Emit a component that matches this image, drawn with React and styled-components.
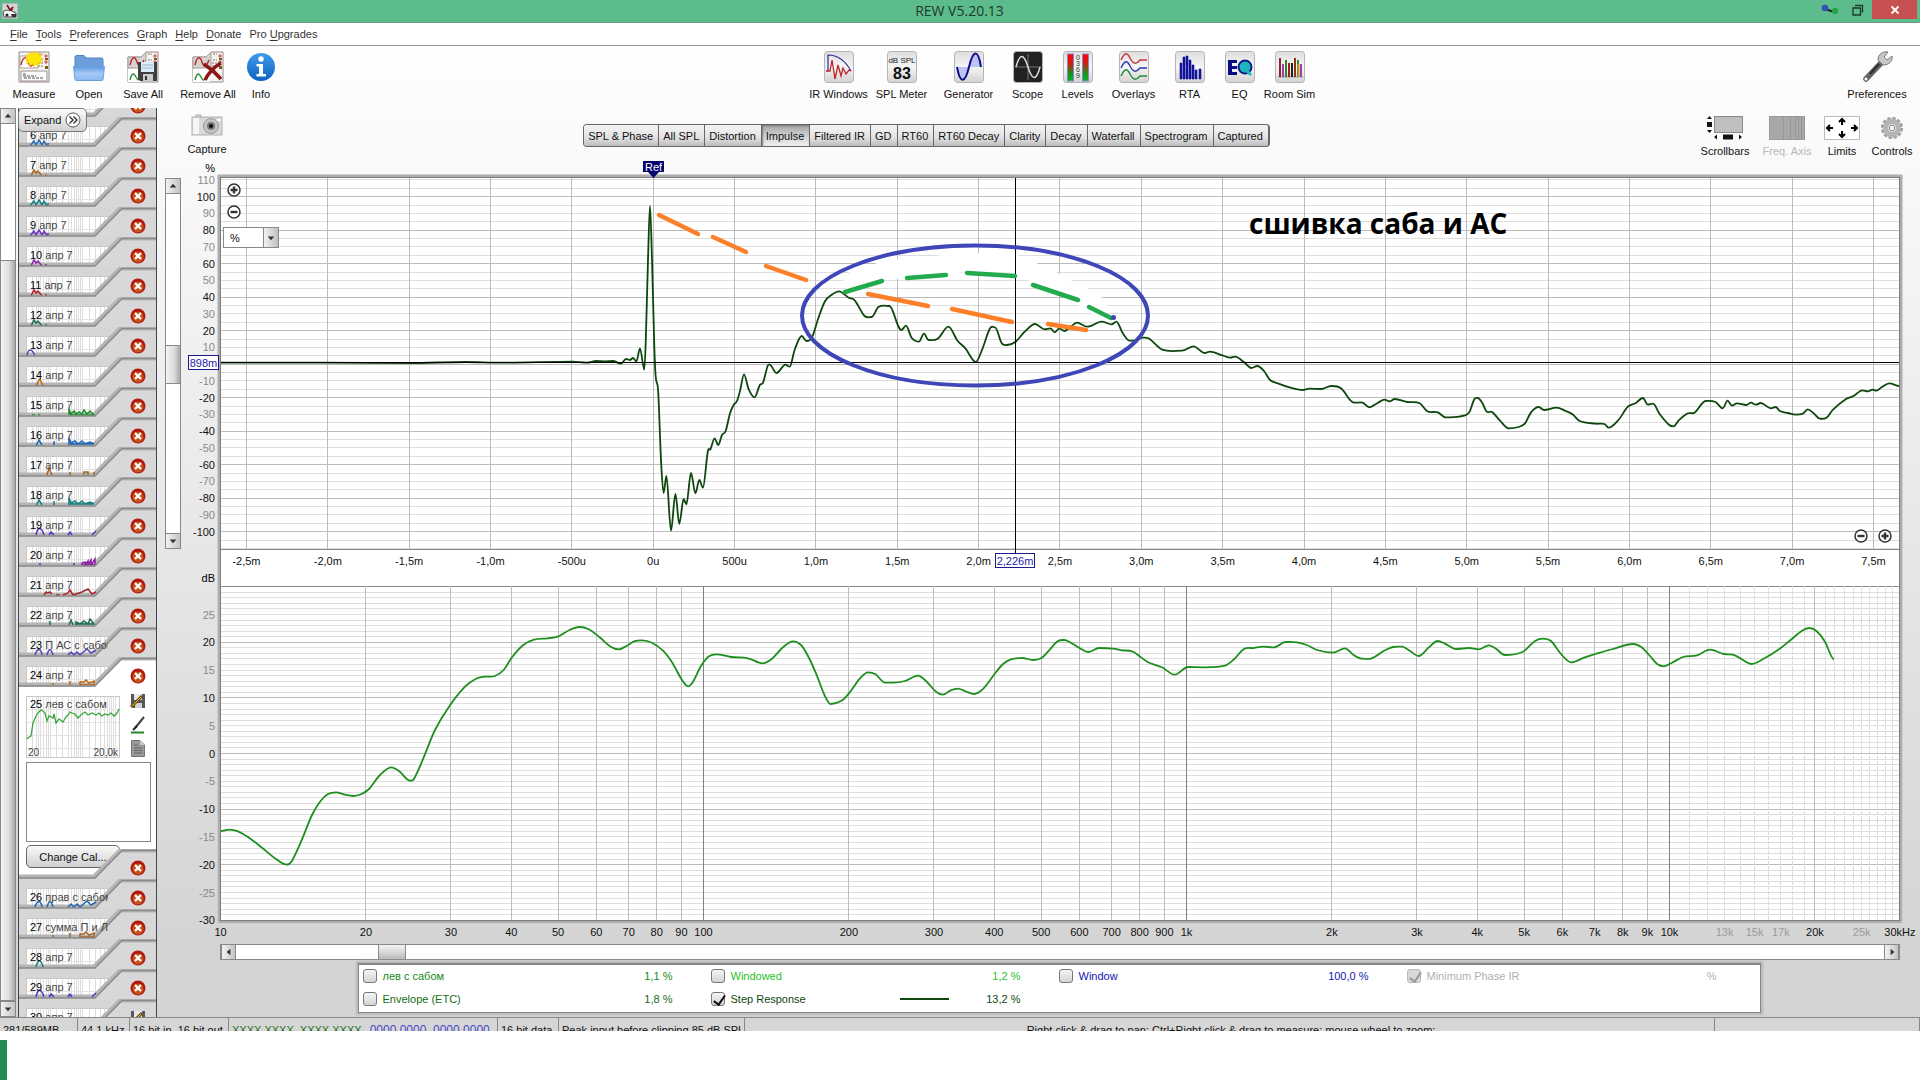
import React, { useState } from 'react'
import styled, { createGlobalStyle, css } from 'styled-components'

/* ---------- data ---------- */

const MENU = [
  ['', 'F', 'ile'],
  ['', 'T', 'ools'],
  ['', 'P', 'references'],
  ['', 'G', 'raph'],
  ['', 'H', 'elp'],
  ['', 'D', 'onate'],
  ['Pro ', 'U', 'pgrades'],
]

const TABS = [
  'SPL & Phase',
  'All SPL',
  'Distortion',
  'Impulse',
  'Filtered IR',
  'GD',
  'RT60',
  'RT60 Decay',
  'Clarity',
  'Decay',
  'Waterfall',
  'Spectrogram',
  'Captured',
]

// trace: the bit of the response that shows at the bottom of each thumbnail
const WAVES = {
  a: 'M12 30 L16 25 L18 29 L21 24 L24 29 L26 25 L29 30 M30 30 V27',
  b: 'M13 30 L16 24 L18 27 L20 25 L24 30 M28 30 V28',
  c: 'M9 30 C10 22 14 22 17 30',
  d: 'M18 30 L20 26 L22 23 L25 30',
  e: 'M14 29 H17 M20 29 H22 M51 29 V23 L53 28 L56 25 L58 28 L61 26 L64 28 L66 24 L69 28 L72 25 L76 29 H52',
  f: 'M18 30 L21 24 L24 29 M36 29 V25 M51 29 V22 L53 27 L57 25 L60 28 L64 25 L67 28 L72 26 L76 28 H52',
  g: 'M29 29 L31 22 L34 29 M52 29 V26 M66 29 V26 H70 V29 M76 29 V26',
  h: 'M18 29 C20 20 23 20 26 29 M31 29 L33 26 L36 29 M50 29 L52 26 L54 29 M74 29 L78 25',
  i: 'M22 29 V27 M56 29 V27 M64 29 V27 L67 26 V29 L70 25 V29 L73 24 V29 L77 23 V29 H64',
  j: 'M26 29 L28 26 L30 27 L32 26 L34 28 M38 29 H42 M45 29 L50 27 L52 24 L55 29 L64 26 L70 23 L74 28 L78 26',
  k: 'M32 29 V25 M51 29 L53 24 L55 29 M58 29 V26 L62 28 L66 25 L70 28 L72 23 L76 28 H58',
  l: 'M17 29 C19 22 23 22 24 29 M29 29 C31 22 33 22 35 29 M50 29 L53 26 L56 29 L59 26 L62 29 L69 23 L73 27 L78 24',
  m: 'M35 29 V27 M52 29 V25 M62 29 V26 H66 L68 24 L71 27 L76 25 V29 H62',
  n: 'M18 29 C20 21 23 21 25 29',
}

const BEFORE = [
  [5, 'апр 7', '#2b8a2b', 'a'],
  [6, 'апр 7', '#2d6fb5', 'a'],
  [7, 'апр 7', '#a8651c', 'b'],
  [8, 'апр 7', '#178080', 'a'],
  [9, 'апр 7', '#6a35c4', 'a'],
  [10, 'апр 7', '#8b22b0', 'b'],
  [11, 'апр 7', '#b01f24', 'b'],
  [12, 'апр 7', '#1c6e4d', 'b'],
  [13, 'апр 7', '#5547b5', 'c'],
  [14, 'апр 7', '#bb6a10', 'd'],
  [15, 'апр 7', '#1c9029', 'e'],
  [16, 'апр 7', '#1d66b4', 'f'],
  [17, 'апр 7', '#a5631c', 'g'],
  [18, 'апр 7', '#178080', 'f'],
  [19, 'апр 7', '#5a35c4', 'h'],
  [20, 'апр 7', '#8b1fa5', 'i'],
  [21, 'апр 7', '#a8232b', 'j'],
  [22, 'апр 7', '#1c7050', 'k'],
  [23, 'П АС с сабом', '#5a3fb5', 'l'],
  [24, 'апр 7', '#bb6a10', 'm'],
]

const AFTER = [
  [26, 'прав с сабом', '#1d66b4', 'l'],
  [27, 'сумма П и Л', '#a5631c', 'm'],
  [28, 'апр 7', '#178080', 'n'],
  [29, 'апр 7', '#5a35c4', 'h'],
  [30, 'апр 7', '#8b1fa5', 'n'],
]

const STEP = [
  220, 362.7, 323, 362.7, 409, 363, 466, 362, 501, 362.7, 573, 361.7, 587, 362.7, 596, 361, 605, 361.3, 613, 361,
  621, 363.7, 626, 359, 630, 360, 633, 358, 636.4, 361.3, 640, 348.3, 644.3, 369.7, 645.8, 340, 648, 260, 650, 206,
  652, 260, 654.3, 346.7, 655.7, 376.7, 658.2, 391.7, 661, 460, 663.6, 493, 666.4, 476, 671, 530.7, 675.4, 494,
  679.3, 524, 683.6, 499, 686.4, 504.3, 691, 473, 695.4, 493.3, 699.3, 480, 702.9, 487.7, 707.9, 451, 710.4, 449.3,
  714.6, 438.3, 718.2, 445, 722, 435, 725.7, 431, 730, 413.3, 733.6, 405, 737, 401, 740, 391, 744, 374.3, 748.7, 389.3,
  754.6, 397.3, 759.8, 385, 763, 382.7, 767.7, 365.7, 769.7, 364.7, 776.4, 373, 785.5, 364.7, 789.8, 366.7, 794.6, 350,
  801.7, 336, 806.4, 341, 812, 337.3, 818.3, 318.3, 825, 301.3, 831.7, 294.7, 838.9, 291.3, 848.7, 297.7, 854.7, 300.3,
  864.6, 316, 871.7, 317, 878.4, 307, 889.5, 306, 898.2, 326, 901.3, 330, 906, 325.7, 911.6, 337.7, 919, 341.7,
  923.9, 333.7, 928.6, 340, 937.7, 338.7, 948.4, 326.7, 957.5, 340.7, 965.4, 348.3, 975.7, 362, 982, 350, 990, 328.3,
  995, 327.3, 1001.8, 343.3, 1007, 345, 1015.6, 341.7, 1024.7, 331.7, 1035, 324, 1044.5, 329.3, 1050.4, 328.3,
  1054.7, 332.3, 1059.5, 328.3, 1064.2, 331, 1070, 327.3, 1077, 322.7, 1087.2, 326.7, 1101.8, 321.7, 1111.7, 324.3,
  1116.4, 321.7, 1122.8, 333.3, 1129.5, 340.7, 1135.4, 340.7, 1142.5, 337.7, 1149.3, 338.7, 1162.3, 349.7, 1182, 350.7,
  1193.5, 346.3, 1204.6, 353, 1209.8, 351.7, 1222.4, 355.3, 1230.3, 357.7, 1235, 356.7, 1244.2, 362.3, 1251.3, 368,
  1257.2, 366, 1264, 371, 1270, 380, 1277.8, 383.3, 1289.6, 387.3, 1302.3, 390, 1309.4, 388.7, 1321.3, 389, 1331, 386,
  1341, 388.3, 1352, 401.7, 1362.6, 402.7, 1369.3, 407.3, 1377.6, 403, 1384.4, 399.7, 1389.7, 401.3, 1394.6, 399,
  1407.7, 402, 1419.8, 403.3, 1427.3, 411.3, 1437.8, 412.3, 1445.4, 417.3, 1460.4, 416.3, 1469, 412.7, 1474.3, 399.3,
  1477.7, 398, 1482.2, 402.7, 1486.7, 411.7, 1492, 412, 1500, 420.7, 1508.6, 428.3, 1518.7, 427, 1525, 423.3,
  1531, 412.3, 1538.7, 407, 1544, 410, 1556.4, 407.7, 1565.8, 411, 1572.5, 414.3, 1579.7, 421, 1595.9, 423.7,
  1604.5, 424, 1608.7, 427.7, 1618.4, 420, 1627.9, 406.7, 1635.4, 403.3, 1643, 398, 1647.8, 404.7, 1653, 403.7,
  1659.8, 414.3, 1669.2, 425, 1673.8, 426.3, 1678.7, 420.3, 1688, 413.3, 1694.5, 412.7, 1705.7, 401, 1715.5, 402,
  1722.7, 408.3, 1727.6, 400.7, 1732, 405.7, 1737, 403.3, 1746.4, 405, 1751, 402.7, 1755.8, 404.7, 1760.7, 403,
  1770.8, 408.3, 1775.7, 407, 1780, 411, 1787.8, 413, 1796, 414.7, 1802.8, 413.7, 1807.7, 409.3, 1813.4, 413,
  1819.8, 418.7, 1826.5, 417.7, 1833, 409.7, 1846, 399, 1853.6, 396, 1862.3, 390.3, 1868, 391.3, 1872.4, 389.7,
  1876.6, 390.7, 1881.8, 387, 1889.4, 383.3, 1899, 386,
]

const RESPONSE = [
  221, 831, 229, 829.7, 238, 831.3, 249, 837.7, 262, 847.7, 276, 859, 287, 864.7, 292, 860.7, 301, 841.7, 312, 815,
  320, 801.7, 328, 794, 336, 792.3, 345, 794.7, 353, 796, 361, 794.3, 369, 789, 380, 775, 391, 767.3, 399, 771,
  407.6, 779.7, 412, 780.7, 416, 775, 424, 756.7, 435, 730, 449, 706.7, 465, 686.7, 476, 678.7, 484, 676.7, 495, 676,
  503.6, 670, 512, 657.3, 523, 645.3, 534, 639.7, 547.5, 638.3, 558.5, 636.3, 569.5, 630, 579.3, 627, 588.7, 629.3,
  599.6, 637.3, 610.6, 646.7, 618.8, 649.3, 627, 645.7, 634, 641.3, 642, 640.3, 652, 642.7, 663, 650.7, 672, 662.3,
  682, 680, 688, 686.3, 693, 681.7, 701, 666, 709, 656.3, 716.5, 654.3, 731, 657, 748, 658.3, 762.5, 663.3,
  772, 658.7, 783, 647.3, 793, 641.3, 801, 645, 808, 656, 816, 673.3, 824.5, 695, 830.6, 704, 841, 701, 849, 693.3,
  860, 678.3, 868, 672.3, 875.6, 674.3, 885, 682.7, 893, 682.7, 905, 681, 918, 675.7, 926, 681, 936, 691.7, 943, 694.7,
  950.7, 690.3, 958, 688.7, 965.5, 691.3, 974, 694, 983.6, 688.3, 994.6, 674, 1003, 664, 1011, 659.3, 1022, 658,
  1033, 660, 1041.5, 658, 1050, 649.3, 1057.6, 641.3, 1064.4, 640, 1073, 644, 1081.7, 649.3, 1088.6, 652, 1099, 648,
  1113, 648.7, 1122, 650.3, 1133, 651.7, 1147.7, 662, 1162, 667.3, 1174.7, 674.7, 1188, 667, 1202, 667.3, 1225, 665.7,
  1234, 659.3, 1244, 649, 1254, 648, 1262.5, 646.7, 1274, 647.3, 1285.5, 642, 1297, 642.3, 1306.7, 645, 1317, 650,
  1333, 652.7, 1345, 648.3, 1354, 655.3, 1362, 658.7, 1371.6, 658.3, 1385, 650.3, 1393, 647, 1402, 646.7, 1410, 651,
  1418.6, 656, 1429, 647.3, 1437.6, 641, 1444.5, 643.3, 1456, 649, 1469, 648, 1479, 649.3, 1489, 645.3, 1496, 648.7,
  1504.7, 655, 1522.5, 652, 1535, 641, 1543, 638.7, 1551, 641, 1561, 654, 1571, 662.3, 1584, 657.7, 1595.5, 654,
  1612.7, 649, 1633, 644, 1641, 646.7, 1650, 656, 1657.5, 664.3, 1664, 666.3, 1672, 662.7, 1683, 657, 1697, 655.3,
  1710, 649.7, 1723.5, 654, 1735, 655.3, 1751.6, 664, 1765, 658, 1779, 649.3, 1790.6, 640, 1802, 630.7, 1809, 628,
  1816.5, 631, 1825, 641.7, 1834, 659.3,
]

const ORANGE = [
  [659, 215, 698, 234],
  [713, 237, 746, 252],
  [766, 266, 806, 280],
  [868, 294, 928, 306],
  [952, 309, 1012, 322],
  [1048, 324, 1086, 330],
]

const GREEN = [
  [845, 292, 882, 281],
  [907, 278, 946, 275],
  [967, 273, 1015, 276],
  [1033, 285, 1078, 300],
  [1089, 307, 1111, 318],
]

const TIME_LABELS = ['-2,5m', '-2,0m', '-1,5m', '-1,0m', '-500u', '0u', '500u', '1,0m', '1,5m', '2,0m', '2,5m',
  '3,0m', '3,5m', '4,0m', '4,5m', '5,0m', '5,5m', '6,0m', '6,5m', '7,0m', '7,5m']

const FREQ_LABELS = [
  [10, '10'], [20, '20'], [30, '30'], [40, '40'], [50, '50'], [60, '60'], [70, '70'], [80, '80'], [90, '90'],
  [100, '100'], [200, '200'], [300, '300'], [400, '400'], [500, '500'], [600, '600'], [700, '700'], [800, '800'],
  [900, '900'], [1000, '1k'], [2000, '2k'], [3000, '3k'], [4000, '4k'], [5000, '5k'], [6000, '6k'], [7000, '7k'],
  [8000, '8k'], [9000, '9k'], [10000, '10k'], [13000, '13k', 1], [15000, '15k', 1], [17000, '17k', 1],
  [20000, '20k'], [25000, '25k', 1], [30000, '30kHz'],
]

/* ---------- helpers ---------- */

const range = (from, to, step) => {
  const out = []
  for (let v = from; v <= to; v += step) out.push(v)
  return out
}

const snap = (v) => Math.floor(v) + 0.5
const timeX = (ms) => 653.2 + 162.7 * ms
const pctY = (v) => 364.2 - 1.675 * v
const freqX = (f) => 220.5 + 483 * Math.log10(f / 10)
const dbY = (v) => 753.5 - 5.56 * v

// smooth line through the points
function curve(flat) {
  const p = []
  for (let i = 0; i < flat.length; i += 2) p.push([flat[i], flat[i + 1]])
  let d = `M${p[0][0]} ${p[0][1]}`
  for (let i = 0; i < p.length - 1; i++) {
    const a = p[i - 1] || p[i]
    const b = p[i]
    const c = p[i + 1]
    const e = p[i + 2] || c
    const k = (c[0] - b[0]) / 3
    const mb = i === 0 || (b[1] - a[1]) * (c[1] - b[1]) <= 0 ? 0 : (c[1] - a[1]) / (c[0] - a[0])
    const mc = (c[1] - b[1]) * (e[1] - c[1]) <= 0 ? 0 : (e[1] - b[1]) / (e[0] - b[0])
    d += `C${(b[0] + k).toFixed(1)} ${(b[1] + k * mb).toFixed(1)} ${(c[0] - k).toFixed(1)} ${(c[1] - k * mc).toFixed(1)} ${c[0]} ${c[1]}`
  }
  return d
}

/* ---------- icons ---------- */

const CardArt = ({ fill = '#fff', second }) => (
  <>
    <path d={second ? 'M1 6V31H31V1H19L14 6Z' : 'M1 1H31V31H1Z'} fill="#f6f3f1" stroke="#958b88" />
    <path d={second ? 'M1 6H14L19 1V17H1Z' : 'M2 5H20V17H2Z'} fill={fill} stroke="#a8a09d" />
    <path d="M3 14C5 5 8 5 10 11S14 16 17 9" fill="none" stroke="#b3262b" strokeWidth="1.4" />
    <path d="M21 9H25M20 12H25M20 15H25M21 3H25" stroke="#777" strokeDasharray="2 1" />
    <path d="M27 4h2v2h-2zM27 10h2v2h-2z" fill="none" stroke="#c44" />
    <path d="M27 7h3v2h-3zM27 15h3v3h-3z" fill="#7b5b18" />
  </>
)

const MeasureIcon = () => (
  <svg width="32" height="32" viewBox="0 0 32 32">
    <CardArt />
    <path d="M3 20H29V30H3Z" fill="#fbfafa" stroke="#9a9290" />
    <path d="M5 23H9M5 25H18M6 27H26" stroke="#555" strokeDasharray="3 1" />
    <path
      d="M16 0l1.500 3 3-2 .3 3.200 3.200-.4-1.600 2.800 3 1.400-3 1.400 1.600 2.800-3.200-.4-.3 3.200-3-2-1.500 3-1.500-3-3 2-.3-3.200-3.200.4 1.600-2.800-3-1.400 3-1.400L8 3.800l3.200.4.3-3.200 3 2z"
      fill="#ffe60a"
      stroke="#f5c400"
      strokeWidth=".6"
    />
  </svg>
)

const OpenIcon = () => (
  <svg width="32" height="32" viewBox="0 0 32 32">
    <defs>
      <linearGradient id="folder" x1="0" y1="0" x2="0" y2="1">
        <stop offset="0" stopColor="#5f98df" />
        <stop offset=".5" stopColor="#a5c9f7" />
        <stop offset="1" stopColor="#8ab8f2" />
      </linearGradient>
    </defs>
    <path d="M2 17V6q0-1.500 1.500-1.500H11l2 2.500H28.500q1.500 0 1.500 1.500V17z" fill="#6d9edb" stroke="#4f82c4" />
    <path d="M0.500 15.500H31.500L30 28.500q0 1-1.500 1H3.500q-1.500 0-1.500-1z" fill="url(#folder)" stroke="#6b9fe0" />
  </svg>
)

const SaveAllIcon = () => (
  <svg width="32" height="32" viewBox="0 0 32 32">
    <CardArt second fill="#d5d2d0" />
    <path d="M1 18H14V31H1Z" fill="#fff" />
    <path d="M3 29C5 21 7 22 9 26S11 29 13 27" fill="none" stroke="#2b8c35" strokeWidth="1.400" />
    <path d="M11 11H30V30H13L11 28Z" fill="#3d3f42" />
    <path d="M14 11H27V21H14Z" fill="#dcebf5" />
    <path d="M15 14H26M15 17H26" stroke="#9db8c9" />
    <path d="M16 23H26V30H16Z" fill="#c9cbcd" />
    <path d="M18 25H20V29H18Z" fill="#333" />
  </svg>
)

const RemoveAllIcon = () => (
  <svg width="32" height="32" viewBox="0 0 32 32">
    <CardArt second fill="#d5d2d0" />
    <path d="M1 18H18V31H1Z" fill="#fff" />
    <path d="M3 29C5 21 7 22 9 26S11 30 15 27" fill="none" stroke="#2b8c35" strokeWidth="1.400" />
    <path d="M12 13C18 17 23 21 29 28M29 12C22 16 17 21 13 29" fill="none" stroke="#8e1518" strokeWidth="3.500" />
  </svg>
)

const InfoIcon = () => (
  <svg width="32" height="32" viewBox="0 0 32 32">
    <defs>
      <linearGradient id="info" x1="0" y1="0" x2="0" y2="1">
        <stop offset="0" stopColor="#3f9bea" />
        <stop offset="1" stopColor="#0d62c2" />
      </linearGradient>
    </defs>
    <circle cx="16" cy="16" r="14" fill="url(#info)" />
    <circle cx="16" cy="8" r="2.700" fill="#fff" />
    <path d="M11.500 13H18V23H21V25.500H11.500V23H14V15.500H11.500Z" fill="#fff" />
  </svg>
)

const Tile = ({ dark, children }) => (
  <svg width="32" height="32" viewBox="0 0 32 32">
    <defs>
      <linearGradient id="tile" x1="0" y1="0" x2="0" y2="1">
        <stop offset="0" stopColor="#dedede" />
        <stop offset=".5" stopColor="#f5f5f5" />
        <stop offset="1" stopColor="#d2d2d2" />
      </linearGradient>
    </defs>
    <rect x="1.500" y=".5" width="29" height="31" rx="3" fill={dark ? '#222' : 'url(#tile)'} stroke="#b4b4b4" />
    {children}
  </svg>
)

const IrIcon = () => (
  <Tile>
    <path d="M5 20V4C15 4 23 11 28 20" fill="none" stroke="#2a2a9c" strokeWidth="1.200" />
    <path d="M3 20H7L9 9L12 28L15 14L18 25L20 17L23 23L26 19L28 20" fill="none" stroke="#c0222a" strokeWidth="1.300" />
  </Tile>
)

const SplIcon = () => (
  <Tile>
    <text x="16" y="12" fontSize="8" textAnchor="middle" fill="#222">dB SPL</text>
    <text x="16" y="28" fontSize="16" fontWeight="700" textAnchor="middle" fill="#111">83</text>
  </Tile>
)

const GeneratorIcon = () => (
  <Tile>
    <path d="M4 16C7 32 12 32 16 16Z M16 16C20 0 26 0 28 16Z" fill="#bcc3f2" />
    <path d="M4 16C7 33 12 33 16 16S25-3 28 16" fill="none" stroke="#0c0c8c" strokeWidth="2" />
  </Tile>
)

const ScopeIcon = () => (
  <Tile dark>
    <path d="M16 3V29M3 16H29" stroke="#777" />
    <path d="M4 16C8 1 12 3 16 16S24 31 28 16" fill="none" stroke="#ddd" strokeWidth="1.500" />
  </Tile>
)

const LevelsIcon = () => (
  <Tile>
    <defs>
      <linearGradient id="level" x1="0" y1="0" x2="0" y2="1">
        <stop offset="0" stopColor="#f00" />
        <stop offset=".35" stopColor="#d02010" />
        <stop offset=".75" stopColor="#0a9b1c" />
        <stop offset="1" stopColor="#12b020" />
      </linearGradient>
    </defs>
    <rect x="5.500" y="3" width="6" height="27" fill="url(#level)" stroke="#8787c8" />
    <rect x="20.500" y="3" width="6" height="27" fill="url(#level)" stroke="#8787c8" />
    {['0', '3', '6', '9'].map((n, i) => (
      <text key={n} x="16" y={9 + i * 6} fontSize="7" textAnchor="middle" fill="#333">{n}</text>
    ))}
  </Tile>
)

const OverlaysIcon = () => (
  <Tile>
    {['#c2383b', '#2c39b8', '#2a8a3b'].map((c, i) => (
      <path key={c} d={`M3 ${9 + i * 8}C7 ${1 + i * 8} 9 ${1 + i * 8} 12 ${7 + i * 8}S18 ${14 + i * 8} 22 ${9 + i * 8}L29 ${9 + i * 8}`} fill="none" stroke={c} strokeWidth="1.400" />
    ))}
  </Tile>
)

const RtaIcon = () => (
  <Tile>
    <path d="M6 28V12h2v16zM9 28V6h2v22zM12 28V5h2v23zM15 28V9h2v19zM18 28V14h2v14zM21 28V19h2v9zM25 28V18h2v10z" fill="#12129a" stroke="#12129a" strokeWidth=".6" />
  </Tile>
)

const EqIcon = () => (
  <Tile>
    <path d="M4 9H13V12H8V15H13V18H8V21H13V24H4Z" fill="#0b0b86" />
    <circle cx="21" cy="16" r="6.500" fill="#1fb4bd" stroke="#0b1a8c" strokeWidth="2" />
    <path d="M22 19L27 24" stroke="#1fb4bd" strokeWidth="3" />
  </Tile>
)

const RoomIcon = () => (
  <Tile>
    <path d="M4 26H29" stroke="#999" />
    <path d="M6 7v19M15 12v14" stroke="#9c1f28" strokeWidth="2" />
    <path d="M9 13v13M27 13v13" stroke="#a33bb0" strokeWidth="2" />
    <path d="M12 9v17M24 9v17" stroke="#2b8a2b" strokeWidth="2" />
    <path d="M18 12v14" stroke="#222" strokeWidth="2" />
    <path d="M21 7v19" stroke="#8b3418" strokeWidth="2" />
    <path d="M24.500 13v13" stroke="#c99a28" strokeWidth="2" />
  </Tile>
)

const WrenchIcon = () => (
  <svg width="32" height="32" viewBox="0 0 32 32">
    <path d="M5 28L20 12" stroke="#666" strokeWidth="5.500" strokeLinecap="round" />
    <path d="M9 23L18 13" stroke="#333" strokeWidth="2.500" />
    <path d="M17 9C17 3 22 0 27 1L23 6L26 9L31 5C32 10 28 14 22 14Z" fill="#c8c8c8" stroke="#777" />
    <circle cx="5" cy="28" r="1.500" fill="#fff" />
  </svg>
)

const CameraIcon = () => (
  <svg width="32" height="23" viewBox="0 0 32 23">
    <path d="M5 3V1h5v2" fill="#ddd" stroke="#aaa" />
    <rect x="1" y="3" width="30" height="18" fill="#d9d9d9" stroke="#b0b0b0" />
    <path d="M2 4H8V20H2Z" fill="#f5f5f5" />
    <circle cx="20" cy="12" r="7.500" fill="#c4c4c4" stroke="#999" />
    <circle cx="20" cy="12" r="4" fill="#777" />
    <circle cx="20" cy="12" r="2" fill="#111" />
    <path d="M26 5h4v2h-4z" fill="#fff" />
  </svg>
)

const ScrollbarsIcon = () => (
  <svg width="38" height="24" viewBox="0 0 38 24">
    <rect x="8.500" y=".5" width="28" height="16" fill="#bfbfbf" stroke="#888" />
    <path d="M1 3L3.500 0L6 3zM1 14L3.500 17L6 14zM1 6h5v5H1zM11 18.500v5L8 21zM33 18.500v5L36 21zM17 18.500h10v5H17z" fill="#111" />
  </svg>
)

const FreqAxisIcon = () => (
  <svg width="38" height="24" viewBox="0 0 38 24">
    <rect x="1.500" y=".5" width="35" height="23" fill="#a8a8a8" stroke="#999" />
    <path d="M15.500 1V23M22.500 1V23M27.500 1V23M30.500 1V23M33.500 1V23" stroke="#969696" />
  </svg>
)

const LimitsIcon = () => (
  <svg width="38" height="24" viewBox="0 0 38 24">
    <rect x="1.500" y=".5" width="35" height="23" fill="#fff" stroke="#bbb" />
    <path d="M4 12H10M7 9L4 12L7 15M34 12H28M31 9L34 12L31 15M19 3V9M16 6L19 3L22 6M19 21V15M16 18L19 21L22 18" fill="none" stroke="#000" strokeWidth="2" />
  </svg>
)

const GearIcon = () => (
  <svg width="24" height="24" viewBox="0 0 24 24">
    <circle cx="12" cy="12" r="9.500" fill="none" stroke="#999" strokeWidth="3" strokeDasharray="3.300 1.670" />
    <circle cx="12" cy="12" r="6.500" fill="none" stroke="#b5b5b5" strokeWidth="5.500" />
    <circle cx="12" cy="12" r="2.800" fill="#f5f5f5" stroke="#8a8a8a" />
  </svg>
)

const AppIcon = () => (
  <svg width="16" height="16" viewBox="0 0 16 16">
    <rect width="16" height="16" fill="#d5d5d5" stroke="#99a" />
    <path d="M1 9C4 6 6 8 8 7L14 10V14H2Z" fill="#f9f9f9" stroke="#444" />
    <path d="M5 2L8 7L11 4L9 8" fill="#a22" stroke="#7a1518" strokeWidth="1.500" />
    <circle cx="5" cy="12" r="1.500" fill="#222" />
    <path d="M9 11H14V14H10Z" fill="#333" />
  </svg>
)

const RemoveIcon = () => (
  <svg width="16" height="16" viewBox="0 0 16 16">
    <circle cx="8" cy="8" r="7.500" fill="#b3180f" />
    <circle cx="8" cy="9" r="5.500" fill="#c4541c" />
    <path d="M5 5L11 11M11 5L5 11" stroke="#fff" strokeWidth="2.200" />
  </svg>
)

const SaveIcon = () => (
  <svg width="16" height="16" viewBox="0 0 16 16">
    <path d="M1 1H15V15H3L1 13Z" fill="#55585c" />
    <path d="M4 1H12V7H4Z" fill="#e5e9ec" />
    <path d="M5 10H12V15H5Z" fill="#d3d3d3" />
    <path d="M1 14L12 3" stroke="#7a4c10" strokeWidth="3" />
    <path d="M2 13L11 4" stroke="#e2b43c" />
  </svg>
)

const PenIcon = () => (
  <svg width="16" height="18" viewBox="0 0 16 18">
    <path d="M5 12L14 1" stroke="#444" strokeWidth="2" />
    <path d="M3 14L7 10" stroke="#222" strokeWidth="2" />
    <path d="M1 16.500H14" stroke="#1f8a2b" strokeWidth="2" />
  </svg>
)

const NotesIcon = () => (
  <svg width="16" height="17" viewBox="0 0 16 17">
    <path d="M1.500 .5H10L14.500 5V16.500H1.500Z" fill="#999" stroke="#777" />
    <path d="M10 .5V5H14.500Z" fill="#ccc" />
    <path d="M4 5H8M4 8H12M4 10.500H12M4 13H12" stroke="#666" />
  </svg>
)

const ZoomIcon = ({ plus }) => (
  <svg width="14" height="14" viewBox="0 0 14 14">
    <circle cx="7" cy="7" r="6" fill="#fff" stroke="#333" strokeWidth="1.500" />
    <path d={plus ? 'M3.500 7H10.500M7 3.500V10.500' : 'M3.500 7H10.500'} stroke="#333" strokeWidth="2.400" />
  </svg>
)

const ARROWS = {
  up: 'M4 9H11L7.500 5Z',
  down: 'M4 6H11L7.500 10Z',
  left: 'M9 4V11L5 7.500Z',
  right: 'M6 4V11L10 7.500Z',
}

const Arrow = ({ dir }) => (
  <svg width="14" height="14" viewBox="0 0 15 15">
    <path d={ARROWS[dir]} fill="#333" />
  </svg>
)

/* ---------- toolbars ---------- */

const LEFT_TOOLS = [
  ['Measure', MeasureIcon, 56],
  ['Open', OpenIcon, 54],
  ['Save All', SaveAllIcon, 54],
  ['Remove All', RemoveAllIcon, 76],
  ['Info', InfoIcon, 30],
]

const CENTER_TOOLS = [
  ['IR Windows', IrIcon, 62],
  ['SPL Meter', SplIcon, 64],
  ['Generator', GeneratorIcon, 70],
  ['Scope', ScopeIcon, 48],
  ['Levels', LevelsIcon, 52],
  ['Overlays', OverlaysIcon, 60],
  ['RTA', RtaIcon, 52],
  ['EQ', EqIcon, 48],
  ['Room Sim', RoomIcon, 52],
]

const GRAPH_TOOLS = [
  ['Scrollbars', ScrollbarsIcon, 62],
  ['Freq. Axis', FreqAxisIcon, 62, true],
  ['Limits', LimitsIcon, 48],
  ['Controls', GearIcon, 52],
]

const Tools = ({ items }) => (
  <ToolGroup>
    {items.map(([label, Icon, width, off]) => (
      <Tool key={label} $width={width} disabled={off}>
        <Icon />
        {label}
      </Tool>
    ))}
  </ToolGroup>
)

/* ---------- measurement list ---------- */

const ThumbGrid = ({ height }) => (
  <>
    <rect x="8.500" y="9.500" width="93" height={height} fill="#fff" stroke="#c9c9c9" />
    <path
      d={[14, 18, 20, 22, 25, 28, 30, 32, 38, 44, 50, 53, 56, 58, 60, 62, 64, 71, 77, 82, 86, 89, 91, 93, 95, 97]
        .map((x) => `M${x}.5 10v${height - 1}`)
        .join('')}
      stroke="#dedede"
    />
    <path d={range(22, 8 + height, 13).map((y) => `M9 ${y}.5h92`).join('')} stroke="#e4e4e4" />
  </>
)

const StepArt = ({ color, wave, tab = '#d8d8d8', bare }) => (
  <RowArt width="139" height="30" viewBox="0 0 139 30" aria-hidden="true">
    {!bare && <rect width="139" height="30" fill="#d6d6d6" />}
    {!bare && <ThumbGrid height={24} />}
    <path d="M77 30L104 1H139V30Z" fill={tab} />
    <path d="M0 27.500H76L102 1.500H139" fill="none" stroke="#b5b5b5" strokeWidth="4" />
    {wave && <path d={WAVES[wave]} fill="none" stroke={color} strokeWidth="1.500" transform="translate(0 -1)" />}
    <path d="M0 29H77L104 1.500H139" fill="none" stroke="#8b8b8b" strokeWidth="1.500" />
  </RowArt>
)

const Row = ({ item, last, tab }) => (
  <ListRow>
    <StepArt color={item[2]} wave={item[3]} tab={tab} />
    <RowLabel>
      <b>{item[0]}</b> {item[1]}
    </RowLabel>
    {last ? (
      <IconButton aria-label="Save"><SaveIcon /></IconButton>
    ) : (
      <IconButton aria-label="Remove"><RemoveIcon /></IconButton>
    )}
  </ListRow>
)

const Measurements = () => (
  <List>
    <Expand>
      Expand
      <svg width="16" height="16" viewBox="0 0 16 16">
        <circle cx="8" cy="8" r="7" fill="#fff" stroke="#555" />
        <path d="M4.500 4.500L8 8L4.500 11.500M8.500 4.500L12 8L8.500 11.500" fill="none" stroke="#333" strokeWidth="1.400" />
      </svg>
    </Expand>
    <Rows>
      {BEFORE.map((m) => (
        <Row key={m[0]} item={m} tab={m[0] === 24 ? '#fff' : undefined} />
      ))}
      <Selected>
        <RowArt width="110" height="76" viewBox="0 0 110 76" aria-hidden="true">
          <ThumbGrid height={61} />
          <path
            d="M9 52L11 50L13 49L15 36L18 29L20 26L23 23L25 24L27 26L29 34L31 29L35 31L36 27L38 36L41 32L45 35L48 30L50 28L52 25L54 26L57 27L60 31L64 27L67 25L70 28L74 26L78 28L81 26L84 29L87 27L90 28L93 26L96 29L99 26L101 22"
            fill="none"
            stroke="#3aa53a"
            strokeWidth="1.300"
          />
          <text x="10" y="69" fontSize="10" fill="#444">20</text>
          <text x="100" y="69" fontSize="10" textAnchor="end" fill="#444">20,0k</text>
        </RowArt>
        <SelectedHead>
          <RowLabel><b>25</b> лев с сабом</RowLabel>
          <SideIcons>
            <IconButton aria-label="Save"><SaveIcon /></IconButton>
            <IconButton aria-label="Trace colour"><PenIcon /></IconButton>
            <IconButton aria-label="Notes"><NotesIcon /></IconButton>
          </SideIcons>
        </SelectedHead>
        <Notes aria-label="Measurement notes" />
        <ChangeCal>Change Cal...</ChangeCal>
      </Selected>
      <ListRow $overlap>
        <StepArt bare />
        <RowLabel />
        <IconButton aria-label="Remove"><RemoveIcon /></IconButton>
      </ListRow>
      {AFTER.map((m) => (
        <Row key={m[0]} item={m} last={m[0] === 30} />
      ))}
    </Rows>
  </List>
)

/* ---------- graphs ---------- */

function Graph() {
  return (
    <Plot viewBox="183 158 1737 784" fontSize="11" role="img" aria-label="Impulse and frequency response">
      <defs>
        <clipPath id="plot"><rect x="221" y="178" width="1678" height="742" /></clipPath>
      </defs>
      <rect x="217" y="174" width="1686" height="750" rx="2" fill="#cfcfcf" />
      <rect x="218" y="175" width="1684" height="748" rx="1" fill="#adadad" />
      <rect x="220" y="177" width="1680" height="744" fill="#7d7d7d" />
      <rect x="221" y="178" width="1678" height="742" fill="#fff" />

      {/* impulse grid */}
      <g shapeRendering="crispEdges" clipPath="url(#plot)">
        {range(-110, 110, 5).map((v) => (
          <path key={v} d={`M221 ${snap(pctY(v))}H1899`} stroke={v % 20 === 0 ? '#bcbcbc' : '#dedede'} />
        ))}
        {range(-2.5, 7.5, 0.5).map((t) => (
          <path key={t} d={`M${snap(timeX(t))} 178V549`} stroke="#bcbcbc" />
        ))}
        <path d="M221 549.500H1899M221 586.500H1899" stroke="#888" />
      </g>
      <path d="M845 284L886 270L960 263L1012 263L1045 277L1085 298L1104 310" fill="none" stroke="#fff" strokeWidth="19" />

      {/* response grid */}
      <g shapeRendering="crispEdges" clipPath="url(#plot)">
        {range(-29, 29, 1).map((v) => (
          <path key={v} d={`M221 ${snap(dbY(v))}H1899`} stroke={v % 10 === 0 ? '#bcbcbc' : '#dedede'} />
        ))}
        {[10, 100, 1000].map((dec) =>
          range(1, 9, 1).map((n) => (
            <path key={dec * n} d={`M${snap(freqX(dec * n))} 586V920`} stroke={n === 1 ? '#808080' : '#bcbcbc'} />
          ))
        )}
        {range(10, 29, 1).map((k) => (
          <path
            key={k}
            d={`M${snap(freqX(k * 1000))} 586V920`}
            stroke={k === 10 ? '#808080' : k === 20 ? '#bcbcbc' : '#dadada'}
            strokeDasharray={k % 10 === 0 ? undefined : '4 1'}
          />
        ))}
      </g>

      {/* traces */}
      <path d={curve(STEP)} fill="none" stroke="#0e470e" strokeWidth="1.800" clipPath="url(#plot)" />
      <path d={curve(RESPONSE)} fill="none" stroke="#1e8f1e" strokeWidth="1.800" clipPath="url(#plot)" />

      {/* cursor */}
      <path d="M221 362.500H1899M1015.500 178V553" stroke="#000" shapeRendering="crispEdges" />

      {/* marks */}
      <ellipse cx="975" cy="315.500" rx="173" ry="70" fill="none" stroke="#3f46b8" strokeWidth="4" />
      <g stroke="#fb8029" strokeWidth="4.500" strokeLinecap="round">
        {ORANGE.map((l) => <path key={l[0]} d={`M${l[0]} ${l[1]}L${l[2]} ${l[3]}`} />)}
      </g>
      <g stroke="#22ab4c" strokeWidth="4.500" strokeLinecap="round">
        {GREEN.map((l) => <path key={l[0]} d={`M${l[0]} ${l[1]}L${l[2]} ${l[3]}`} />)}
      </g>
      <circle cx="1113.500" cy="317.500" r="2.500" fill="#3f46b8" />
      <text x="1249" y="234" fontSize="28" fontWeight="700" fontFamily="'Open Sans', sans-serif">сшивка саба и АС</text>

      {/* reference flag */}
      <path d="M643 161H664V172H659L653.500 178L648 172H643Z" fill="#04046c" />
      <text x="653.500" y="171" textAnchor="middle" fill="#fff">Ref</text>

      {/* axis labels */}
      <g textAnchor="end">
        <text x="215" y="172">%</text>
        <text x="215" y="582">dB</text>
        {range(-100, 110, 10).map((v) =>
          v === 0 ? null : (
            <text key={v} x="215" y={Math.round(pctY(v)) + 4} fill={v % 20 === 0 ? '#111' : '#8a8a8a'}>{v}</text>
          )
        )}
        {range(-30, 25, 5).map((v) => (
          <text key={v} x="215" y={Math.round(dbY(v)) + 4} fill={v % 10 === 0 ? '#111' : '#8a8a8a'}>{v}</text>
        ))}
      </g>
      <g textAnchor="middle">
        {TIME_LABELS.map((label, i) => (
          <text key={label} x={timeX(i * 0.5 - 2.5)} y="565" fill="#111">{label}</text>
        ))}
        {FREQ_LABELS.map(([f, label, dim]) => (
          <text key={label} x={freqX(f)} y="936" fill={dim ? '#9a9a9a' : '#111'}>{label}</text>
        ))}
      </g>

      <rect x="188.500" y="355.500" width="30" height="14" fill="#fff" stroke="#1c1c8c" />
      <text x="203.500" y="367" textAnchor="middle" fill="#1c1ca8">898m</text>
      <rect x="995.500" y="553.500" width="39" height="14" fill="#fff" stroke="#1c1c8c" />
      <text x="1015" y="565" textAnchor="middle" fill="#1c1ca8">2,226m</text>
    </Plot>
  )
}

const LEGEND = [
  { label: 'лев с сабом', value: '1,1 %', color: '#148a14' },
  { label: 'Windowed', value: '1,2 %', color: '#27c227' },
  { label: 'Window', value: '100,0 %', color: '#1414b4' },
  { label: 'Minimum Phase IR', value: '%', color: '#b0b0b0', on: true, off: true },
  { label: 'Envelope (ETC)', value: '1,8 %', color: '#146e14' },
  { label: 'Step Response', value: '13,2 %', color: '#0e470e', on: true, line: true },
]

/* ---------- page ---------- */

function App() {
  const [tab, setTab] = useState('Impulse')
  return (
    <>
      <Global />
      <Window>
        <TitleBar>
          <AppIcon />
          <Title>REW V5.20.13</Title>
          <WindowButtons>
            <TitleButton aria-label="Minimize">
              <svg width="18" height="12" viewBox="0 0 18 12">
                <path d="M4 5L13 8" stroke="#222" strokeWidth="2" />
                <circle cx="4" cy="4" r="3.200" fill="#3450b8" />
                <circle cx="14" cy="7" r="3.200" fill="#1ea84a" />
              </svg>
            </TitleButton>
            <TitleButton aria-label="Restore">
              <svg width="12" height="12" viewBox="0 0 12 12">
                <path d="M1 4H8.500V11H1ZM3 1.500H10.500V8.500" fill="none" stroke="#1d3a2b" strokeWidth="1.300" />
              </svg>
            </TitleButton>
            <TitleButton $close aria-label="Close">
              <svg width="10" height="10" viewBox="0 0 10 10">
                <path d="M1.500 1.500L8.500 8.500M8.500 1.500L1.500 8.500" stroke="#fff" strokeWidth="1.800" />
              </svg>
            </TitleButton>
          </WindowButtons>
        </TitleBar>

        <MenuBar>
          {MENU.map(([before, key, rest]) => (
            <MenuItem key={rest}>{before}<u>{key}</u>{rest}</MenuItem>
          ))}
        </MenuBar>

        <Toolbar>
          <Tools items={LEFT_TOOLS} />
          <Tools items={CENTER_TOOLS} />
          <Tools items={[['Preferences', WrenchIcon, 60]]} />
        </Toolbar>

        <Body>
          <VScroll>
            <ScrollButton aria-label="Scroll up"><Arrow dir="up" /></ScrollButton>
            <Track $grow={136} />
            <VThumb $grow={741} />
            <ScrollButton aria-label="Scroll down"><Arrow dir="down" /></ScrollButton>
          </VScroll>
          <Measurements />
          <Main>
            <GraphBar>
              <Capture>
                <CameraIcon />
                Capture
              </Capture>
              <TabRow>
                {TABS.map((t) => (
                  <Tab key={t} $active={t === tab} onClick={() => setTab(t)}>{t}</Tab>
                ))}
              </TabRow>
              <GraphTools><Tools items={GRAPH_TOOLS} /></GraphTools>
            </GraphBar>

            <GraphArea>
              <GraphScroll>
                <VScroll>
                  <ScrollButton aria-label="Scroll up"><Arrow dir="up" /></ScrollButton>
                  <Track $grow={152} />
                  <VThumb $grow={38} />
                  <Track $grow={150} />
                  <ScrollButton aria-label="Scroll down"><Arrow dir="down" /></ScrollButton>
                </VScroll>
              </GraphScroll>
              <Graph />
              <LeftControls>
                <ZoomButton aria-label="Zoom in vertically"><ZoomIcon plus /></ZoomButton>
                <ZoomButton aria-label="Zoom out vertically"><ZoomIcon /></ZoomButton>
                <UnitSelect>
                  <select aria-label="Vertical unit" defaultValue="%">
                    <option>%</option>
                    <option>dBFS</option>
                  </select>
                  <span><Arrow dir="down" /></span>
                </UnitSelect>
              </LeftControls>
              <RightControls>
                <ZoomButton aria-label="Zoom out horizontally"><ZoomIcon /></ZoomButton>
                <ZoomButton aria-label="Zoom in horizontally"><ZoomIcon plus /></ZoomButton>
              </RightControls>
            </GraphArea>

            <HScroll>
              <ScrollButton $side aria-label="Scroll left"><Arrow dir="left" /></ScrollButton>
              <Track $grow={142} />
              <HThumb />
              <Track $grow={1478} />
              <ScrollButton $side aria-label="Scroll right"><Arrow dir="right" /></ScrollButton>
            </HScroll>

            <Legend>
              {LEGEND.map((item) => (
                <LegendItem key={item.label} $color={item.color}>
                  <input type="checkbox" defaultChecked={item.on} disabled={item.off} />
                  <span>{item.label}</span>
                  {item.line && <LegendLine />}
                  <output>{item.value}</output>
                </LegendItem>
              ))}
            </Legend>
          </Main>
        </Body>

        <StatusBar>
          <Status $width={78}>281/589MB</Status>
          <Status $width={52}>44.1 kHz</Status>
          <Status $width={99}>16 bit in, 16 bit out</Status>
          <Status $width={269}>
            <Bits $color="#1a6e1a">XXXX XXXX&nbsp; XXXX XXXX</Bits>
            <Bits $color="#4a4ac8" $big>0000 0000&nbsp; 0000 0000</Bits>
          </Status>
          <Status $width={61}>16 bit data</Status>
          <Status $width={186}>Peak input before clipping 85 dB SPL</Status>
          <Status $hint>Right click & drag to pan; Ctrl+Right click & drag to measure; mouse wheel to zoom;</Status>
          <Status $width={205} />
        </StatusBar>
      </Window>
      <Taskbar />
    </>
  )
}

/* ---------- styles ---------- */

const Global = createGlobalStyle`
  * {
    box-sizing: border-box;
  }
  body {
    margin: 0;
    background: #fff;
    color: #111;
    font: 11px/14px 'Liberation Sans', Arial, sans-serif;
  }
  button, input, select, textarea {
    font: inherit;
    color: inherit;
    margin: 0;
    padding: 0;
  }
  svg {
    display: block;
    flex-shrink: 0;
  }
`

const Window = styled.div`
  display: flex;
  flex-direction: column;
  margin-right: 10px;
  background: linear-gradient(#fefefe 6%, #f8f8f8 18%, #d4d4d4 92%);
`

const TitleBar = styled.header`
  display: grid;
  grid-template-columns: 1fr auto 1fr;
  align-items: center;
  height: 23px;
  padding: 0 3px 1px 2px;
  background: #5cbc8c;
  border-bottom: 1px solid #6f9a85;
`

const Title = styled.h1`
  margin: 0;
  font: 400 14px/20px 'Open Sans', sans-serif;
  color: #1d3a2b;
`

const WindowButtons = styled.div`
  display: flex;
  justify-content: flex-end;
  align-self: start;
`

const TitleButton = styled.button`
  display: flex;
  align-items: center;
  justify-content: center;
  width: ${({ $close }) => ($close ? 45 : 28)}px;
  height: 19px;
  border: none;
  background: ${({ $close }) => ($close ? '#c75050' : 'none')};
`

const MenuBar = styled.nav`
  display: flex;
  align-items: center;
  gap: 8px;
  height: 23px;
  padding-left: 10px;
  background: #fff;
  border-bottom: 1px solid #999;
`

const MenuItem = styled.button`
  border: none;
  background: none;
  color: #333;
  u {
    text-underline-offset: 2px;
  }
`

const Toolbar = styled.div`
  display: flex;
  justify-content: space-between;
  height: 62px;
  padding: 5px 13px 0 6px;
`

const ToolGroup = styled.div`
  display: flex;
`

const Tool = styled.button`
  display: flex;
  flex-direction: column;
  align-items: center;
  justify-content: flex-end;
  gap: 4px;
  width: ${({ $width }) => $width}px;
  height: 50px;
  border: none;
  background: none;
  white-space: nowrap;
  &:disabled {
    color: #b8b8b8;
  }
`

const Body = styled.div`
  display: flex;
`

const VScroll = styled.div`
  display: flex;
  flex-direction: column;
  width: 16px;
  border: solid #888;
  border-width: 0 1px;
  background: #fff;
`

const ScrollButton = styled.button`
  display: flex;
  align-items: center;
  justify-content: center;
  flex: none;
  width: ${({ $side }) => ($side ? '15px' : '14px')};
  height: ${({ $side }) => ($side ? '14px' : '16px')};
  overflow: hidden;
  border: solid #888;
  border-width: ${({ $side }) => ($side ? '0 1px' : '1px 0')};
  background: linear-gradient(90deg, #f2f2f2, #c4c4c4);
`

const Track = styled.div`
  flex: ${({ $grow }) => $grow};
  background: #fff;
`

const VThumb = styled.div`
  flex: ${({ $grow }) => $grow};
  border: solid #888;
  border-width: 1px 0;
  background: linear-gradient(90deg, #f4f4f4, #dadada 60%, #a8a8a8);
`

const HThumb = styled.div`
  width: 28px;
  border: solid #888;
  border-width: 0 1px;
  background: linear-gradient(#f4f4f4, #bcbcbc);
`

const List = styled.aside`
  position: relative;
  contain: size;
  flex: none;
  width: 139px;
  margin-left: 2px;
  overflow: hidden;
  background: #d6d6d6;
  &::after {
    content: '';
    position: absolute;
    inset: 0;
    border: solid #444;
    border-width: 0 1px;
    pointer-events: none;
  }
`

const Expand = styled.button`
  position: absolute;
  z-index: 2;
  top: 0;
  left: 0;
  display: flex;
  align-items: center;
  gap: 4px;
  height: 24px;
  padding: 0 5px;
  border: 1px solid #777;
  border-radius: 5px;
  background: linear-gradient(#fafafa, #d2d2d2);
`

const Rows = styled.div`
  margin-top: -21px;
`

const ListRow = styled.div`
  position: relative;
  display: flex;
  justify-content: space-between;
  height: 30px;
  margin-top: ${({ $overlap }) => ($overlap ? '-28px' : '0')};
  padding: 11px 11px 0 12px;
`

const RowArt = styled.svg`
  position: absolute;
  top: 0;
  left: 0;
`

const RowLabel = styled.span`
  position: relative;
  width: 78px;
  overflow: hidden;
  white-space: nowrap;
  color: #444;
  b {
    font-weight: 400;
    color: #000;
  }
`

const IconButton = styled.button`
  position: relative;
  align-self: start;
  border: none;
  background: none;
`

const Selected = styled.section`
  position: relative;
  height: 190px;
  padding: 10px 6px 0 8px;
  background: #fff;
`

const SelectedHead = styled.div`
  display: flex;
  justify-content: space-between;
  height: 65px;
  padding: 0 5px 0 4px;
`

const SideIcons = styled.div`
  display: flex;
  flex-direction: column;
  justify-content: space-between;
  height: 64px;
  margin-top: -4px;
`

const Notes = styled.textarea`
  display: block;
  width: 100%;
  height: 80px;
  border: 1px solid #888;
  background: #fff;
  resize: none;
`

const ChangeCal = styled.button`
  display: block;
  width: 94px;
  height: 23px;
  margin-top: 3px;
  border: 1px solid #666;
  border-radius: 5px;
  background: linear-gradient(#fafafa, #cfcfcf);
`

const Main = styled.main`
  flex: 1;
  min-width: 0;
  display: flex;
  flex-direction: column;
  padding-bottom: 4px;
`

const GraphBar = styled.div`
  display: grid;
  grid-template-columns: 100px 1fr 324px;
  height: 50px;
`

const Capture = styled.button`
  display: flex;
  flex-direction: column;
  align-items: center;
  gap: 5px;
  padding-top: 6px;
  border: none;
  background: none;
`

const TabRow = styled.div`
  display: flex;
  justify-self: center;
  align-self: start;
  height: 23px;
  margin-top: 16px;
  border: 1px solid #666;
  border-right-width: 2px;
  border-radius: 4px;
  overflow: hidden;
`

const Tab = styled.button`
  padding: 0 5px 0 4px;
  border: none;
  background: linear-gradient(#f4f4f4, #e2e2e2 60%, #bdbdbd);
  white-space: nowrap;
  & + & {
    border-left: 1px solid #666;
  }
  ${({ $active }) =>
    $active &&
    css`
      background: linear-gradient(#a5a5a5, #cfcfcf 50%, #f0f0f0);
      box-shadow: inset 1px 1px 2px #777;
    `}
`

const GraphTools = styled.div`
  display: flex;
  justify-content: flex-end;
  padding-right: 2px;
`

const GraphArea = styled.div`
  position: relative;
  display: flex;
  margin-bottom: 2px;
`

const Plot = styled.svg`
  flex: 1 1 0;
  width: 0;
  min-width: 0;
`

const GraphScroll = styled.div`
  display: flex;
  flex: none;
  width: 26px;
  padding: 20px 2px 393px 8px;
`

const LeftControls = styled.div`
  position: absolute;
  top: 25px;
  left: 66px;
  display: flex;
  flex-direction: column;
  align-items: flex-start;
  gap: 8px;
`

const RightControls = styled.div`
  position: absolute;
  right: 28px;
  bottom: 399px;
  display: flex;
  gap: 6px;
`

const ZoomButton = styled.button`
  margin-left: 4px;
  border: none;
  background: none;
`

const UnitSelect = styled.div`
  display: flex;
  width: 56px;
  height: 21px;
  border: 1px solid #888;
  background: #fff;
  select {
    flex: 1;
    min-width: 0;
    padding-left: 6px;
    border: none;
    background: none;
    appearance: none;
  }
  span {
    display: flex;
    align-items: center;
    border-left: 1px solid #888;
    background: linear-gradient(90deg, #f2f2f2, #c0c0c0);
    pointer-events: none;
  }
`

const HScroll = styled.div`
  display: flex;
  height: 16px;
  margin: 0 20px 3px 63px;
  border: 1px solid #888;
  background: #fff;
`

const Legend = styled.form`
  display: grid;
  grid-template-columns: repeat(4, 310px);
  column-gap: 38px;
  align-content: start;
  align-self: center;
  row-gap: 9px;
  height: 50px;
  margin-left: 41px;
  padding: 4px 43px 0 4px;
  border: 1px solid #888;
  border-top-width: 2px;
  background: #fff;
  box-shadow: 0 0 2px 2px #b8b8b8;
`

const LegendItem = styled.label`
  display: flex;
  align-items: center;
  gap: 6px;
  color: ${({ $color }) => $color};
  input {
    position: relative;
    appearance: none;
    width: 14px;
    height: 14px;
    border: 1px solid #777;
    border-radius: 3px;
    background: linear-gradient(#f6f6f6, #d4d4d4);
  }
  input:checked::after {
    content: '';
    position: absolute;
    left: 4px;
    top: 0;
    width: 5px;
    height: 10px;
    border: solid #111;
    border-width: 0 2px 2px 0;
    transform: rotate(35deg);
  }
  input:disabled {
    border-color: #b8b8b8;
    background: #d8d8d8;
  }
  input:disabled::after {
    border-color: #999;
  }
  output {
    margin-left: auto;
  }
`

const LegendLine = styled.i`
  width: 49px;
  height: 2px;
  margin-left: 88px;
  background: #0e470e;
`

const StatusBar = styled.footer`
  display: flex;
  height: 14px;
  overflow: hidden;
  border-top: 1px solid #888;
  background: #d6d6d6;
`

const Status = styled.div`
  display: flex;
  flex: none;
  gap: 8px;
  width: ${({ $width }) => $width}px;
  padding: 5px 0 0 3px;
  white-space: nowrap;
  border-right: 1px solid #888;
  ${({ $hint }) =>
    $hint &&
    css`
      flex: 1;
      justify-content: center;
    `}
`

const Bits = styled.span`
  color: ${({ $color }) => $color};
  font-size: ${({ $big }) => ($big ? 12 : 11)}px;
`

const Taskbar = styled.div`
  width: 7px;
  height: 40px;
  margin-top: 9px;
  background: #218a55;
`

export default App
